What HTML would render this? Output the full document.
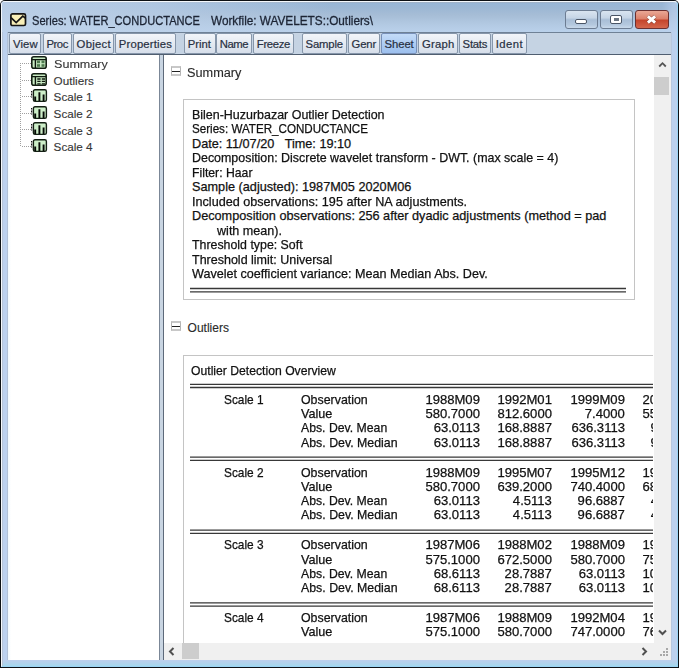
<!DOCTYPE html>
<html><head><meta charset="utf-8">
<style>
html,body{margin:0;padding:0;}
body{width:679px;height:668px;overflow:hidden;position:relative;background:#fff;font-family:"Liberation Sans",sans-serif;}
.t{position:absolute;white-space:pre;-webkit-text-stroke:0.25px currentColor;}
.tl{-webkit-text-stroke:0.12px currentColor;}
.tt{-webkit-text-stroke:0.3px currentColor;}
.tb{-webkit-text-stroke:0.2px currentColor;}
#win{position:absolute;left:0;top:0;width:679px;height:668px;background:#0c1014;border-radius:5px 5px 0 0;}
#frame{position:absolute;left:1px;top:1px;width:677px;height:666px;background:#bcd1ee;border-radius:4px 4px 0 0;}
#hl{position:absolute;left:1px;top:1px;width:677px;height:666px;border-left:1px solid #f4f8fc;border-top:1px solid #f4f8fc;border-right:1px solid #9ad4f4;border-bottom:1px solid #9ad4f4;box-sizing:border-box;border-radius:4px 4px 0 0;}
#titlebg{position:absolute;left:2px;top:2px;width:675px;border-radius:3px 3px 0 0;-webkit-mask:linear-gradient(90deg,#000 660px,rgba(0,0,0,0.4) 672px);height:30px;background:linear-gradient(#a3b0c0 0px,#98b6d6 1.5px,#9cb7d4 6px,#a6bdd6 13px,#b2c9e2 22px,#bad1eb 30px);}
#tool{position:absolute;left:8px;top:32px;width:663px;height:23px;background:#c5d3e3;border-top:1px solid #6f8196;border-bottom:1px solid #505e70;box-sizing:border-box;}
.btn{position:absolute;top:33px;height:21px;box-sizing:border-box;border:1px solid #8696aa;border-radius:2px;background:linear-gradient(#f2f5fa,#e6ebf2 45%,#d6deea);}
.btn.sel{background:linear-gradient(#c4dbf8,#afcdf3 50%,#9dc0ee);border-color:#7890b8;}
#left{position:absolute;left:8px;top:55px;width:151px;height:605px;background:linear-gradient(90deg,#f0f8fc,#fff 3px);}
#split{position:absolute;left:159px;top:55px;width:5px;height:605px;background:#c9d5e2;border-left:1px solid #7b8797;border-right:1px solid #5e6a7a;box-sizing:border-box;}
#right{position:absolute;left:164px;top:55px;width:507px;height:605px;background:#fff;overflow:hidden;}
#clip{position:absolute;left:0;top:0;width:489px;height:588px;overflow:hidden;}
#vsb{position:absolute;left:490px;top:0;width:17px;height:588px;background:#f0f0f0;}
#hsb{position:absolute;left:0;top:588px;width:490px;height:17px;background:#f0f0f0;}
#corner{position:absolute;left:490px;top:588px;width:17px;height:17px;background:#f0f0f0;}
.abs{position:absolute;}
.minus{position:absolute;width:10px;height:10px;box-sizing:border-box;border:1px solid #b4b4b4;border-top:2px solid #c8c8c8;border-bottom:2px solid #c8c8c8;background:#fff;}
.minus:after{content:"";position:absolute;left:0px;top:3px;width:8px;height:1.3px;background:#222;}
.dl{position:absolute;height:1px;background:#222;}
.ico{position:absolute;width:16px;height:13px;box-sizing:border-box;border:1.5px solid #2c3a2c;border-radius:3px;background:#c6e6c0;}
</style></head><body>
<div id="win"></div>
<div id="frame"></div>
<div id="hl"></div>
<div id="titlebg"></div>
<div class="abs" style="left:2px;top:2px;width:675px;height:30px;background:linear-gradient(90deg, rgba(190,210,234,0.85) 0px, rgba(190,210,234,0.6) 150px, rgba(190,210,234,0) 330px);"></div>
<!-- envelope icon -->
<svg class="abs" style="left:10px;top:13px" width="17" height="14" viewBox="0 0 17 14">
<rect x="0.9" y="0.9" width="14.6" height="11.6" rx="1.6" fill="#f8efb8" stroke="#161616" stroke-width="1.7"/>
<path d="M1 4.6 L6.2 9.6 L12.8 3.2 L15.4 5.2" fill="none" stroke="#161616" stroke-width="1.7" stroke-linejoin="miter"/>
</svg>
<!-- window buttons -->
<div class="abs" style="left:565px;top:10px;width:33px;height:19px;box-sizing:border-box;border:1px solid #6c7c92;border-radius:3px;background:linear-gradient(#d9e4f0,#c6d5e6 40%,#a9bed6 52%,#b4c8de 80%,#c8d8ea);"></div>
<div class="abs" style="left:575px;top:19px;width:12px;height:5px;box-sizing:border-box;border:1.2px solid #4a5566;background:#fff;border-radius:2px;"></div>
<div class="abs" style="left:600px;top:10px;width:33px;height:19px;box-sizing:border-box;border:1px solid #6c7c92;border-radius:3px;background:linear-gradient(#d9e4f0,#c6d5e6 40%,#a9bed6 52%,#b4c8de 80%,#c8d8ea);"></div>
<div class="abs" style="left:610px;top:15px;width:12px;height:9px;box-sizing:border-box;border:1.5px solid #4a5566;background:#fff;border-radius:2px;"></div><div class="abs" style="left:613.5px;top:18px;width:5px;height:3px;background:#6b7582;"></div>
<div class="abs" style="left:635px;top:10px;width:34px;height:19px;box-sizing:border-box;border:1px solid #6a3030;border-radius:3px;background:linear-gradient(#eaa896,#dc826c 45%,#c5452c 55%,#d4664c);"></div>
<svg class="abs" style="left:645px;top:14px" width="13" height="11" viewBox="0 0 13 11"><path d="M2.8 2.2 L10.2 8.8 M10.2 2.2 L2.8 8.8" stroke="#4a2420" stroke-width="4.2" opacity="0.45"/><path d="M2.9 2.3 L10.1 8.7 M10.1 2.3 L2.9 8.7" stroke="#fff" stroke-width="2.9"/></svg>
<div class="abs" style="left:2px;top:660px;width:675px;height:6px;background:linear-gradient(#bccfec,#b2d2ec 50%,#a4d8ee);"></div>
<div class="abs" style="left:2px;top:32px;width:1px;height:634px;background:#b6c4d6;"></div>
<div class="abs" style="left:7px;top:32px;width:1px;height:628px;background:#b0c0d6;"></div>
<div class="abs" style="left:671px;top:32px;width:1px;height:628px;background:#b8c8de;"></div>
<div id="tool"></div>
<div class="btn" style="left:9.0px;width:32.0px"></div>
<div class="btn" style="left:42.5px;width:29.3px"></div>
<div class="btn" style="left:73.0px;width:40.7px"></div>
<div class="btn" style="left:114.5px;width:61.2px"></div>
<div class="btn" style="left:183.9px;width:31.8px"></div>
<div class="btn" style="left:215.5px;width:36.9px"></div>
<div class="btn" style="left:252.8px;width:41.7px"></div>
<div class="btn" style="left:301.6px;width:45.5px"></div>
<div class="btn" style="left:347.6px;width:32.2px"></div>
<div class="btn sel" style="left:380.7px;width:36.8px"></div>
<div class="btn" style="left:418.0px;width:40.0px"></div>
<div class="btn" style="left:458.6px;width:32.7px"></div>
<div class="btn" style="left:492.2px;width:34.4px"></div>

<div class="t tt" style="top:15.02px;font-size:12.5px;line-height:12.5px;color:#1c2434;left:32.00px;transform:scaleX(0.8872);transform-origin:0 0;">Series: WATER_CONDUCTANCE</div>
<div class="t tt" style="top:15.02px;font-size:12.5px;line-height:12.5px;color:#1c2434;left:211.00px;transform:scaleX(0.9417);transform-origin:0 0;">Workfile: WAVELETS::Outliers\</div>
<div class="t tb" style="top:39.23px;font-size:11.3px;line-height:11.3px;color:#283042;left:13.00px;letter-spacing:0.139px;">View</div>
<div class="t tb" style="top:39.23px;font-size:11.3px;line-height:11.3px;color:#283042;left:46.50px;letter-spacing:-0.476px;">Proc</div>
<div class="t tb" style="top:39.23px;font-size:11.3px;line-height:11.3px;color:#283042;left:76.60px;letter-spacing:0.270px;">Object</div>
<div class="t tb" style="top:39.23px;font-size:11.3px;line-height:11.3px;color:#283042;left:118.80px;letter-spacing:0.168px;">Properties</div>
<div class="t tb" style="top:39.23px;font-size:11.3px;line-height:11.3px;color:#283042;left:187.70px;letter-spacing:0.018px;">Print</div>
<div class="t tb" style="top:39.23px;font-size:11.3px;line-height:11.3px;color:#283042;left:219.70px;letter-spacing:-0.445px;">Name</div>
<div class="t tb" style="top:39.23px;font-size:11.3px;line-height:11.3px;color:#283042;left:256.80px;letter-spacing:-0.312px;">Freeze</div>
<div class="t tb" style="top:39.23px;font-size:11.3px;line-height:11.3px;color:#283042;left:305.60px;letter-spacing:-0.181px;">Sample</div>
<div class="t tb" style="top:39.23px;font-size:11.3px;line-height:11.3px;color:#283042;left:351.50px;letter-spacing:-0.105px;">Genr</div>
<div class="t tb" style="top:39.23px;font-size:11.3px;line-height:11.3px;color:#283042;left:384.60px;letter-spacing:-0.105px;">Sheet</div>
<div class="t tb" style="top:39.23px;font-size:11.3px;line-height:11.3px;color:#283042;left:422.00px;letter-spacing:0.201px;">Graph</div>
<div class="t tb" style="top:39.23px;font-size:11.3px;line-height:11.3px;color:#283042;left:462.60px;letter-spacing:-0.236px;">Stats</div>
<div class="t tb" style="top:39.23px;font-size:11.3px;line-height:11.3px;color:#283042;left:495.70px;letter-spacing:0.469px;">Ident</div>
<div id="left">
</div>
<div id="split"></div>
<div id="right">
 <div id="clip">
 </div>
 <div id="vsb">
   <svg class="abs" style="left:4px;top:6px" width="9" height="7" viewBox="0 0 9 7"><path d="M1.2 5.5 L4.5 2.2 L7.8 5.5" fill="none" stroke="#555" stroke-width="1.8"/></svg>
   <div class="abs" style="left:0;top:22px;width:15px;height:18px;background:#cdcdcd;"></div>
   <svg class="abs" style="left:4px;top:574px" width="9" height="7" viewBox="0 0 9 7"><path d="M1 1.5 L4.5 5 L8 1.5" fill="none" stroke="#505050" stroke-width="2"/></svg>
 </div>
 <div id="hsb">
   <svg class="abs" style="left:4px;top:4px" width="7" height="9" viewBox="0 0 7 9"><path d="M5.5 1 L2 4.5 L5.5 8" fill="none" stroke="#505050" stroke-width="2"/></svg>
   <div class="abs" style="left:18px;top:0;width:17px;height:16px;background:#cdcdcd;"></div>
   <svg class="abs" style="left:477px;top:4px" width="7" height="9" viewBox="0 0 7 9"><path d="M1.5 1 L5 4.5 L1.5 8" fill="none" stroke="#505050" stroke-width="2"/></svg>
 </div>
 <div id="corner"><svg class="abs" style="left:0;top:0" width="17" height="17"><g fill="#a8a8a8"><rect x="12" y="5" width="2" height="2"/><rect x="9" y="8" width="2" height="2"/><rect x="12" y="8" width="2" height="2"/><rect x="6" y="11" width="2" height="2"/><rect x="9" y="11" width="2" height="2"/><rect x="12" y="11" width="2" height="2"/></g></svg></div>
</div>
<svg class="abs" style="left:0;top:0" width="60" height="160">
<path d="M20.5 63 V147" stroke="#a0a0a0" stroke-width="1" stroke-dasharray="1 1" fill="none"/>
<path d="M22 63.5 H31 M22 80.5 H31 M22 96.5 H31 M22 113.5 H31 M22 129.5 H31 M22 146.5 H31" stroke="#a0a0a0" stroke-width="1" stroke-dasharray="1 1" fill="none"/>
</svg>
<svg class="abs" style="left:31px;top:56px;overflow:visible" width="16" height="13" viewBox="0 0 16 13"><rect x="0.8" y="0.8" width="14.4" height="11.4" rx="2" fill="#c8eac2" stroke="#142014" stroke-width="1.6"/><rect x="6" y="4.6" width="3" height="2.6" fill="#4e7a4e"/><rect x="10.5" y="4.6" width="3" height="2.6" fill="#4e7a4e"/><rect x="6" y="8.2" width="3" height="2.6" fill="#4e7a4e"/><rect x="10.5" y="8.2" width="3" height="2.6" fill="#4e7a4e"/><path d="M1 3.6 H15 M4.4 3.6 V12" stroke="#0e180e" stroke-width="1.4"/></svg>
<svg class="abs" style="left:31px;top:72.6px;overflow:visible" width="16" height="13" viewBox="0 0 16 13"><rect x="0.8" y="0.8" width="14.4" height="11.4" rx="2" fill="#c8eac2" stroke="#142014" stroke-width="1.6"/><path d="M1 3.6 H15 M4.4 3.6 V12" stroke="#0e180e" stroke-width="1.4"/><path d="M6.3 6 H9.6 M6.3 8.4 H9.6 M6.3 10.8 H9.6 M10.8 6 H14 M10.8 8.4 H14 M10.8 10.8 H14" stroke="#0e180e" stroke-width="1.3"/></svg>
<svg class="abs" style="left:31px;top:89.2px;overflow:visible" width="16" height="13" viewBox="0 0 16 13"><rect x="2.4" y="0.8" width="13" height="11.6" rx="1.6" fill="#cdeec8" stroke="#142014" stroke-width="1.4"/><path d="M4.2 12 V7.6 M8.4 12 V3.3 M12.6 12 V5.4" stroke="#050805" stroke-width="1.9"/><path d="M0.6 2 V8.5" stroke="#1a1a1a" stroke-width="1.2" stroke-dasharray="1 0.5"/></svg>
<svg class="abs" style="left:31px;top:105.7px;overflow:visible" width="16" height="13" viewBox="0 0 16 13"><rect x="2.4" y="0.8" width="13" height="11.6" rx="1.6" fill="#cdeec8" stroke="#142014" stroke-width="1.4"/><path d="M4.2 12 V7.6 M8.4 12 V3.3 M12.6 12 V5.4" stroke="#050805" stroke-width="1.9"/><path d="M0.6 2 V8.5" stroke="#1a1a1a" stroke-width="1.2" stroke-dasharray="1 0.5"/></svg>
<svg class="abs" style="left:31px;top:122.3px;overflow:visible" width="16" height="13" viewBox="0 0 16 13"><rect x="2.4" y="0.8" width="13" height="11.6" rx="1.6" fill="#cdeec8" stroke="#142014" stroke-width="1.4"/><path d="M4.2 12 V7.6 M8.4 12 V3.3 M12.6 12 V5.4" stroke="#050805" stroke-width="1.9"/><path d="M0.6 2 V8.5" stroke="#1a1a1a" stroke-width="1.2" stroke-dasharray="1 0.5"/></svg>
<svg class="abs" style="left:31px;top:138.9px;overflow:visible" width="16" height="13" viewBox="0 0 16 13"><rect x="2.4" y="0.8" width="13" height="11.6" rx="1.6" fill="#cdeec8" stroke="#142014" stroke-width="1.4"/><path d="M4.2 12 V7.6 M8.4 12 V3.3 M12.6 12 V5.4" stroke="#050805" stroke-width="1.9"/><path d="M0.6 2 V8.5" stroke="#1a1a1a" stroke-width="1.2" stroke-dasharray="1 0.5"/></svg>
<div class="t tl" style="top:58.30px;font-size:11.7px;line-height:11.7px;color:#363636;left:53.60px;transform:scaleX(1.0759);transform-origin:0 0;">Summary</div>
<div class="t tl" style="top:74.85px;font-size:11.7px;line-height:11.7px;color:#363636;left:53.60px;">Outliers</div>
<div class="t tl" style="top:91.40px;font-size:11.7px;line-height:11.7px;color:#363636;left:53.60px;">Scale 1</div>
<div class="t tl" style="top:107.95px;font-size:11.7px;line-height:11.7px;color:#363636;left:53.60px;">Scale 2</div>
<div class="t tl" style="top:124.50px;font-size:11.7px;line-height:11.7px;color:#363636;left:53.60px;">Scale 3</div>
<div class="t tl" style="top:141.05px;font-size:11.7px;line-height:11.7px;color:#363636;left:53.60px;">Scale 4</div>
<div class="abs" style="left:164px;top:55px;width:489px;height:588px;overflow:hidden;">
<div class="abs" style="left:-164px;top:-55px;width:679px;height:668px;">
<div class="minus" style="left:171px;top:66px"></div>
<div class="abs" style="left:183px;top:99px;width:452px;height:201px;box-sizing:border-box;border:1px solid #c4c4c4;"></div>
<div class="minus" style="left:171px;top:321px"></div>
<div class="abs" style="left:183px;top:355px;width:600px;height:400px;box-sizing:border-box;border:1px solid #c4c4c4;"></div>
<svg class="abs" style="left:0;top:0" width="679" height="668">
<g stroke="#383838" stroke-width="1.3" fill="none">
<path d="M190 288.5 H626 M190 291.8 H626"/>
<path d="M190 384.4 H670 M190 387.5 H670"/>
<path d="M190 457.1 H670 M190 460.4 H670"/>
<path d="M190 530.2 H670 M190 533.3 H670"/>
<path d="M190 602.9 H670 M190 606.1 H670"/>
</g></svg>
<div class="t tl" style="top:67.34px;font-size:12px;line-height:12px;color:#2a2a2a;left:187.00px;transform:scaleX(1.0596);transform-origin:0 0;">Summary</div>
<div class="t " style="top:108.95px;font-size:12.7px;line-height:12.7px;color:#111;left:192.00px;transform:scaleX(0.9820);transform-origin:0 0;">Bilen-Huzurbazar Outlier Detection</div>
<div class="t " style="top:123.45px;font-size:12.7px;line-height:12.7px;color:#111;left:192.00px;transform:scaleX(0.9157);transform-origin:0 0;">Series: WATER_CONDUCTANCE</div>
<div class="t " style="top:137.95px;font-size:12.7px;line-height:12.7px;color:#111;left:192.00px;">Date: 11/07/20   Time: 19:10</div>
<div class="t " style="top:152.45px;font-size:12.7px;line-height:12.7px;color:#111;left:192.00px;transform:scaleX(0.9793);transform-origin:0 0;">Decomposition: Discrete wavelet transform - DWT. (max scale = 4)</div>
<div class="t " style="top:166.95px;font-size:12.7px;line-height:12.7px;color:#111;left:192.00px;transform:scaleX(0.9642);transform-origin:0 0;">Filter: Haar</div>
<div class="t " style="top:181.45px;font-size:12.7px;line-height:12.7px;color:#111;left:192.00px;">Sample (adjusted): 1987M05 2020M06</div>
<div class="t " style="top:195.95px;font-size:12.7px;line-height:12.7px;color:#111;left:192.00px;transform:scaleX(0.9951);transform-origin:0 0;">Included observations: 195 after NA adjustments.</div>
<div class="t " style="top:210.45px;font-size:12.7px;line-height:12.7px;color:#111;left:192.00px;">Decomposition observations: 256 after dyadic adjustments (method = pad</div>
<div class="t " style="top:224.95px;font-size:12.7px;line-height:12.7px;color:#111;left:216.70px;transform:scaleX(0.9912);transform-origin:0 0;">with mean).</div>
<div class="t " style="top:239.45px;font-size:12.7px;line-height:12.7px;color:#111;left:192.00px;transform:scaleX(0.9741);transform-origin:0 0;">Threshold type: Soft</div>
<div class="t " style="top:253.95px;font-size:12.7px;line-height:12.7px;color:#111;left:192.00px;transform:scaleX(0.9851);transform-origin:0 0;">Threshold limit: Universal</div>
<div class="t " style="top:268.45px;font-size:12.7px;line-height:12.7px;color:#111;left:192.00px;transform:scaleX(0.9924);transform-origin:0 0;">Wavelet coefficient variance: Mean Median Abs. Dev.</div>
<div class="t tl" style="top:321.64px;font-size:12px;line-height:12px;color:#2a2a2a;left:187.60px;">Outliers</div>
<div class="t " style="top:364.65px;font-size:12.7px;line-height:12.7px;color:#111;left:191.10px;transform:scaleX(0.9603);transform-origin:0 0;">Outlier Detection Overview</div>
<div class="t " style="top:393.85px;font-size:12.7px;line-height:12.7px;color:#111;left:224.40px;transform:scaleX(0.9358);transform-origin:0 0;">Scale 1</div>
<div class="t " style="top:393.85px;font-size:12.7px;line-height:12.7px;color:#111;left:300.60px;transform:scaleX(0.9751);transform-origin:0 0;">Observation</div>
<div class="t num" style="top:393.85px;font-size:12.7px;line-height:12.7px;color:#111;left:426.69px;transform:scaleX(1.0300);transform-origin:100% 0;">1988M09</div>
<div class="t num" style="top:393.85px;font-size:12.7px;line-height:12.7px;color:#111;left:498.69px;transform:scaleX(1.0300);transform-origin:100% 0;">1992M01</div>
<div class="t num" style="top:393.85px;font-size:12.7px;line-height:12.7px;color:#111;left:571.89px;transform:scaleX(1.0300);transform-origin:100% 0;">1999M09</div>
<div class="t num" style="top:393.85px;font-size:12.7px;line-height:12.7px;color:#111;left:644.49px;transform:scaleX(1.0300);transform-origin:100% 0;">2020M05</div>
<div class="t " style="top:408.10px;font-size:12.7px;line-height:12.7px;color:#111;left:300.60px;transform:scaleX(0.9966);transform-origin:0 0;">Value</div>
<div class="t num" style="top:408.10px;font-size:12.7px;line-height:12.7px;color:#111;left:426.68px;transform:scaleX(1.0300);transform-origin:100% 0;">580.7000</div>
<div class="t num" style="top:408.10px;font-size:12.7px;line-height:12.7px;color:#111;left:498.68px;transform:scaleX(1.0300);transform-origin:100% 0;">812.6000</div>
<div class="t num" style="top:408.10px;font-size:12.7px;line-height:12.7px;color:#111;left:585.99px;transform:scaleX(1.0300);transform-origin:100% 0;">7.4000</div>
<div class="t num" style="top:408.10px;font-size:12.7px;line-height:12.7px;color:#111;left:644.48px;transform:scaleX(1.0300);transform-origin:100% 0;">559.1000</div>
<div class="t " style="top:422.35px;font-size:12.7px;line-height:12.7px;color:#111;left:300.60px;transform:scaleX(0.9651);transform-origin:0 0;">Abs. Dev. Mean</div>
<div class="t num" style="top:422.35px;font-size:12.7px;line-height:12.7px;color:#111;left:434.68px;transform:scaleX(1.0300);transform-origin:100% 0;">63.0113</div>
<div class="t num" style="top:422.35px;font-size:12.7px;line-height:12.7px;color:#111;left:498.68px;transform:scaleX(1.0300);transform-origin:100% 0;">168.8887</div>
<div class="t num" style="top:422.35px;font-size:12.7px;line-height:12.7px;color:#111;left:572.82px;transform:scaleX(1.0300);transform-origin:100% 0;">636.3113</div>
<div class="t num" style="top:422.35px;font-size:12.7px;line-height:12.7px;color:#111;left:651.54px;transform:scaleX(1.0300);transform-origin:100% 0;">91.3887</div>
<div class="t " style="top:436.60px;font-size:12.7px;line-height:12.7px;color:#111;left:300.60px;transform:scaleX(0.9728);transform-origin:0 0;">Abs. Dev. Median</div>
<div class="t num" style="top:436.60px;font-size:12.7px;line-height:12.7px;color:#111;left:434.68px;transform:scaleX(1.0300);transform-origin:100% 0;">63.0113</div>
<div class="t num" style="top:436.60px;font-size:12.7px;line-height:12.7px;color:#111;left:498.68px;transform:scaleX(1.0300);transform-origin:100% 0;">168.8887</div>
<div class="t num" style="top:436.60px;font-size:12.7px;line-height:12.7px;color:#111;left:572.82px;transform:scaleX(1.0300);transform-origin:100% 0;">636.3113</div>
<div class="t num" style="top:436.60px;font-size:12.7px;line-height:12.7px;color:#111;left:651.54px;transform:scaleX(1.0300);transform-origin:100% 0;">91.3887</div>
<div class="t " style="top:466.60px;font-size:12.7px;line-height:12.7px;color:#111;left:224.40px;transform:scaleX(0.9358);transform-origin:0 0;">Scale 2</div>
<div class="t " style="top:466.60px;font-size:12.7px;line-height:12.7px;color:#111;left:300.60px;transform:scaleX(0.9751);transform-origin:0 0;">Observation</div>
<div class="t num" style="top:466.60px;font-size:12.7px;line-height:12.7px;color:#111;left:426.69px;transform:scaleX(1.0300);transform-origin:100% 0;">1988M09</div>
<div class="t num" style="top:466.60px;font-size:12.7px;line-height:12.7px;color:#111;left:498.69px;transform:scaleX(1.0300);transform-origin:100% 0;">1995M07</div>
<div class="t num" style="top:466.60px;font-size:12.7px;line-height:12.7px;color:#111;left:571.89px;transform:scaleX(1.0300);transform-origin:100% 0;">1995M12</div>
<div class="t num" style="top:466.60px;font-size:12.7px;line-height:12.7px;color:#111;left:644.49px;transform:scaleX(1.0300);transform-origin:100% 0;">1996M02</div>
<div class="t " style="top:480.85px;font-size:12.7px;line-height:12.7px;color:#111;left:300.60px;transform:scaleX(0.9966);transform-origin:0 0;">Value</div>
<div class="t num" style="top:480.85px;font-size:12.7px;line-height:12.7px;color:#111;left:426.68px;transform:scaleX(1.0300);transform-origin:100% 0;">580.7000</div>
<div class="t num" style="top:480.85px;font-size:12.7px;line-height:12.7px;color:#111;left:498.68px;transform:scaleX(1.0300);transform-origin:100% 0;">639.2000</div>
<div class="t num" style="top:480.85px;font-size:12.7px;line-height:12.7px;color:#111;left:571.88px;transform:scaleX(1.0300);transform-origin:100% 0;">740.4000</div>
<div class="t num" style="top:480.85px;font-size:12.7px;line-height:12.7px;color:#111;left:644.48px;transform:scaleX(1.0300);transform-origin:100% 0;">683.5000</div>
<div class="t " style="top:495.10px;font-size:12.7px;line-height:12.7px;color:#111;left:300.60px;transform:scaleX(0.9651);transform-origin:0 0;">Abs. Dev. Mean</div>
<div class="t num" style="top:495.10px;font-size:12.7px;line-height:12.7px;color:#111;left:434.68px;transform:scaleX(1.0300);transform-origin:100% 0;">63.0113</div>
<div class="t num" style="top:495.10px;font-size:12.7px;line-height:12.7px;color:#111;left:513.74px;transform:scaleX(1.0300);transform-origin:100% 0;">4.5113</div>
<div class="t num" style="top:495.10px;font-size:12.7px;line-height:12.7px;color:#111;left:578.94px;transform:scaleX(1.0300);transform-origin:100% 0;">96.6887</div>
<div class="t num" style="top:495.10px;font-size:12.7px;line-height:12.7px;color:#111;left:652.48px;transform:scaleX(1.0300);transform-origin:100% 0;">43.6113</div>
<div class="t " style="top:509.35px;font-size:12.7px;line-height:12.7px;color:#111;left:300.60px;transform:scaleX(0.9728);transform-origin:0 0;">Abs. Dev. Median</div>
<div class="t num" style="top:509.35px;font-size:12.7px;line-height:12.7px;color:#111;left:434.68px;transform:scaleX(1.0300);transform-origin:100% 0;">63.0113</div>
<div class="t num" style="top:509.35px;font-size:12.7px;line-height:12.7px;color:#111;left:513.74px;transform:scaleX(1.0300);transform-origin:100% 0;">4.5113</div>
<div class="t num" style="top:509.35px;font-size:12.7px;line-height:12.7px;color:#111;left:578.94px;transform:scaleX(1.0300);transform-origin:100% 0;">96.6887</div>
<div class="t num" style="top:509.35px;font-size:12.7px;line-height:12.7px;color:#111;left:652.48px;transform:scaleX(1.0300);transform-origin:100% 0;">43.6113</div>
<div class="t " style="top:539.35px;font-size:12.7px;line-height:12.7px;color:#111;left:224.40px;transform:scaleX(0.9358);transform-origin:0 0;">Scale 3</div>
<div class="t " style="top:539.35px;font-size:12.7px;line-height:12.7px;color:#111;left:300.60px;transform:scaleX(0.9751);transform-origin:0 0;">Observation</div>
<div class="t num" style="top:539.35px;font-size:12.7px;line-height:12.7px;color:#111;left:426.69px;transform:scaleX(1.0300);transform-origin:100% 0;">1987M06</div>
<div class="t num" style="top:539.35px;font-size:12.7px;line-height:12.7px;color:#111;left:498.69px;transform:scaleX(1.0300);transform-origin:100% 0;">1988M02</div>
<div class="t num" style="top:539.35px;font-size:12.7px;line-height:12.7px;color:#111;left:571.89px;transform:scaleX(1.0300);transform-origin:100% 0;">1988M09</div>
<div class="t num" style="top:539.35px;font-size:12.7px;line-height:12.7px;color:#111;left:644.49px;transform:scaleX(1.0300);transform-origin:100% 0;">1995M12</div>
<div class="t " style="top:553.60px;font-size:12.7px;line-height:12.7px;color:#111;left:300.60px;transform:scaleX(0.9966);transform-origin:0 0;">Value</div>
<div class="t num" style="top:553.60px;font-size:12.7px;line-height:12.7px;color:#111;left:426.68px;transform:scaleX(1.0300);transform-origin:100% 0;">575.1000</div>
<div class="t num" style="top:553.60px;font-size:12.7px;line-height:12.7px;color:#111;left:498.68px;transform:scaleX(1.0300);transform-origin:100% 0;">672.5000</div>
<div class="t num" style="top:553.60px;font-size:12.7px;line-height:12.7px;color:#111;left:571.88px;transform:scaleX(1.0300);transform-origin:100% 0;">580.7000</div>
<div class="t num" style="top:553.60px;font-size:12.7px;line-height:12.7px;color:#111;left:644.48px;transform:scaleX(1.0300);transform-origin:100% 0;">751.4000</div>
<div class="t " style="top:567.85px;font-size:12.7px;line-height:12.7px;color:#111;left:300.60px;transform:scaleX(0.9651);transform-origin:0 0;">Abs. Dev. Mean</div>
<div class="t num" style="top:567.85px;font-size:12.7px;line-height:12.7px;color:#111;left:434.68px;transform:scaleX(1.0300);transform-origin:100% 0;">68.6113</div>
<div class="t num" style="top:567.85px;font-size:12.7px;line-height:12.7px;color:#111;left:505.74px;transform:scaleX(1.0300);transform-origin:100% 0;">28.7887</div>
<div class="t num" style="top:567.85px;font-size:12.7px;line-height:12.7px;color:#111;left:579.88px;transform:scaleX(1.0300);transform-origin:100% 0;">63.0113</div>
<div class="t num" style="top:567.85px;font-size:12.7px;line-height:12.7px;color:#111;left:644.48px;transform:scaleX(1.0300);transform-origin:100% 0;">107.6887</div>
<div class="t " style="top:582.10px;font-size:12.7px;line-height:12.7px;color:#111;left:300.60px;transform:scaleX(0.9728);transform-origin:0 0;">Abs. Dev. Median</div>
<div class="t num" style="top:582.10px;font-size:12.7px;line-height:12.7px;color:#111;left:434.68px;transform:scaleX(1.0300);transform-origin:100% 0;">68.6113</div>
<div class="t num" style="top:582.10px;font-size:12.7px;line-height:12.7px;color:#111;left:505.74px;transform:scaleX(1.0300);transform-origin:100% 0;">28.7887</div>
<div class="t num" style="top:582.10px;font-size:12.7px;line-height:12.7px;color:#111;left:579.88px;transform:scaleX(1.0300);transform-origin:100% 0;">63.0113</div>
<div class="t num" style="top:582.10px;font-size:12.7px;line-height:12.7px;color:#111;left:644.48px;transform:scaleX(1.0300);transform-origin:100% 0;">107.6887</div>
<div class="t " style="top:612.10px;font-size:12.7px;line-height:12.7px;color:#111;left:224.40px;transform:scaleX(0.9358);transform-origin:0 0;">Scale 4</div>
<div class="t " style="top:612.10px;font-size:12.7px;line-height:12.7px;color:#111;left:300.60px;transform:scaleX(0.9751);transform-origin:0 0;">Observation</div>
<div class="t num" style="top:612.10px;font-size:12.7px;line-height:12.7px;color:#111;left:426.69px;transform:scaleX(1.0300);transform-origin:100% 0;">1987M06</div>
<div class="t num" style="top:612.10px;font-size:12.7px;line-height:12.7px;color:#111;left:498.69px;transform:scaleX(1.0300);transform-origin:100% 0;">1988M09</div>
<div class="t num" style="top:612.10px;font-size:12.7px;line-height:12.7px;color:#111;left:571.89px;transform:scaleX(1.0300);transform-origin:100% 0;">1992M04</div>
<div class="t num" style="top:612.10px;font-size:12.7px;line-height:12.7px;color:#111;left:644.49px;transform:scaleX(1.0300);transform-origin:100% 0;">1995M12</div>
<div class="t " style="top:626.35px;font-size:12.7px;line-height:12.7px;color:#111;left:300.60px;transform:scaleX(0.9966);transform-origin:0 0;">Value</div>
<div class="t num" style="top:626.35px;font-size:12.7px;line-height:12.7px;color:#111;left:426.68px;transform:scaleX(1.0300);transform-origin:100% 0;">575.1000</div>
<div class="t num" style="top:626.35px;font-size:12.7px;line-height:12.7px;color:#111;left:498.68px;transform:scaleX(1.0300);transform-origin:100% 0;">580.7000</div>
<div class="t num" style="top:626.35px;font-size:12.7px;line-height:12.7px;color:#111;left:571.88px;transform:scaleX(1.0300);transform-origin:100% 0;">747.0000</div>
<div class="t num" style="top:626.35px;font-size:12.7px;line-height:12.7px;color:#111;left:644.48px;transform:scaleX(1.0300);transform-origin:100% 0;">761.4000</div>
</div></div>
</body></html>
